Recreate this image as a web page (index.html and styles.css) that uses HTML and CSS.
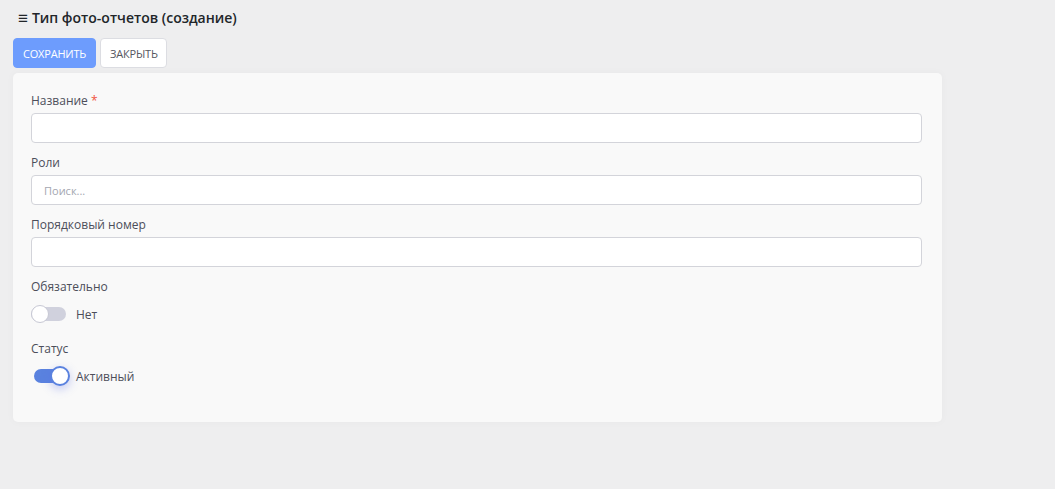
FILE: index.html
```html
<!DOCTYPE html>
<html lang="ru">
<head>
<meta charset="utf-8">
<link rel="stylesheet" href="styles.css">
</head>
<body>
<div class="page">
  <h1 class="title"><span class="burger">&#8801;</span>Тип фото-отчетов (создание)</h1>
  <div class="actions">
    <button class="btn btn-primary">СОХРАНИТЬ</button>
    <button class="btn btn-default">ЗАКРЫТЬ</button>
  </div>
  <div class="card">
    <div class="field">
      <label class="label">Название <span class="req">*</span></label>
      <input class="input" type="text">
    </div>
    <div class="field">
      <label class="label">Роли</label>
      <input class="input" type="text" placeholder="Поиск...">
    </div>
    <div class="field">
      <label class="label">Порядковый номер</label>
      <input class="input" type="text">
    </div>
    <div class="field">
      <label class="label">Обязательно</label>
      <div class="switch-row">
        <span class="switch"><span class="knob"></span></span>
        <span class="switch-text">Нет</span>
      </div>
    </div>
    <div class="field">
      <label class="label">Статус</label>
      <div class="switch-row">
        <span class="switch on"><span class="knob"></span></span>
        <span class="switch-text">Активный</span>
      </div>
    </div>
  </div>
</div>
</body>
</html>
```
FILE: styles.css
```css
* { box-sizing: border-box; }
html, body { margin: 0; padding: 0; }
body {
  background: #eeeeef;
  font-family: "Open Sans", "Noto Sans", sans-serif;
  color: #3f4254;
  width: 1055px;
  height: 489px;
  overflow: hidden;
}
.page {
  padding: 7px 0 0 13px;
  width: 942px;
}
.title {
  margin: 0 0 9px 5px;
  font-size: 14px;
  font-weight: 600;
  color: #212529;
  line-height: 22px;
  display: flex;
  align-items: center;
}
.burger {
  font-size: 17px;
  font-weight: 400;
  margin-right: 4px;
  line-height: 22px;
}
.actions {
  display: flex;
  gap: 4px;
  margin-bottom: 5px;
}
.btn {
  height: 30px;
  border-radius: 4px;
  font-family: "Open Sans", "Noto Sans", sans-serif;
  font-size: 11px;
  padding: 0 9px;
  cursor: pointer;
  letter-spacing: -0.2px;
}
.btn-primary {
  background: #6d9cfd;
  border: 1px solid #6d9cfd;
  color: #ffffff;
  width: 83px;
}
.btn-default {
  background: #ffffff;
  border: 1px solid #dcdde2;
  color: #555760;
  width: 67px;
}
.card {
  background: #f9f9f9;
  border-radius: 5px;
  box-shadow: 0 0 8px rgba(0,0,0,0.03);
  padding: 19px 20px 24px 18px;
  display: flex;
  flex-direction: column;
  gap: 11px;
  height: 349px;
}
.field { display: flex; flex-direction: column; }
.label {
  font-size: 12px;
  line-height: 18px;
  color: #4c4e5a;
  margin-bottom: 3px;
}
.req { color: #f1553d; }
.input {
  height: 30px;
  width: 100%;
  border: 1px solid #d3d4da;
  border-radius: 4px;
  background: #ffffff;
  padding: 0 12px;
  font-family: "Open Sans", "Noto Sans", sans-serif;
  font-size: 11px;
  outline: none;
}
.input::placeholder { color: #a4a6b0; }
.switch-row {
  display: flex;
  align-items: center;
  height: 30px;
  gap: 10px;
}
.switch {
  position: relative;
  width: 35px;
  height: 14px;
  border-radius: 7px;
  background: #d0d1dd;
  display: inline-block;
}
.knob {
  position: absolute;
  top: -2px;
  left: 0;
  width: 18px;
  height: 18px;
  border-radius: 50%;
  background: #ffffff;
  border: 1.5px solid #c7c8d4;
}
.switch.on {
  background: #5a82df;
  width: 33px;
  margin-left: 3px;
}
.switch.on .knob {
  left: auto;
  right: -3px;
  top: -3px;
  width: 20px;
  height: 20px;
  border: 2px solid #5a82df;
  box-shadow: 0 3px 10px rgba(90,110,230,0.35);
}
.switch.on + .switch-text { margin-left: -1px; }
.switch-text {
  font-size: 12px;
  color: #4c4e5a;
}
```
